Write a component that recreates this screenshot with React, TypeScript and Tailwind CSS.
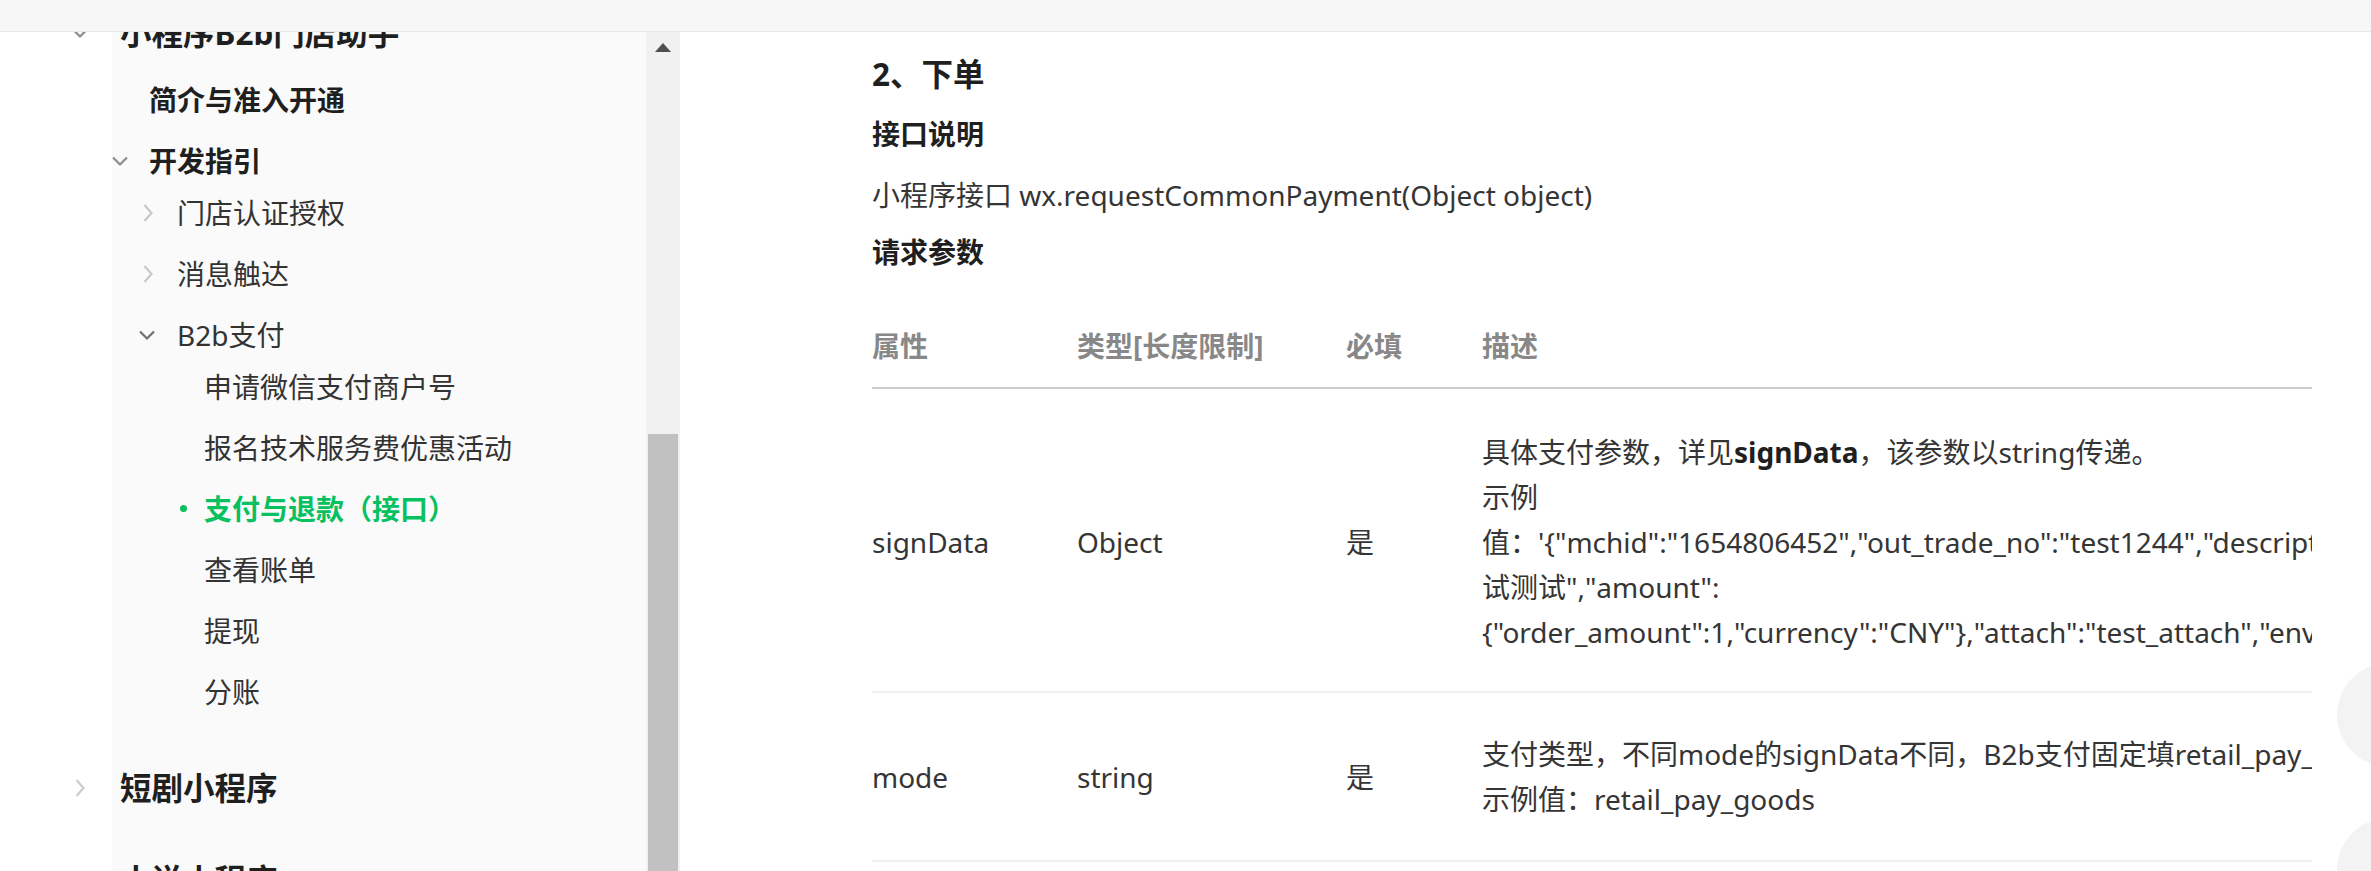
import type { ReactNode } from 'react';

const FONT = "font-['Noto_Sans','Noto_Sans_CJK_SC',sans-serif]";

function ChevronDown({ className }: { className?: string }) {
  return (
    <svg width="18" height="12" viewBox="0 0 18 12" fill="none" className={className}>
      <path d="M2 2.5l7 7 7-7" stroke="currentColor" strokeWidth="2.2" />
    </svg>
  );
}

function ChevronRight({ className }: { className?: string }) {
  return (
    <svg width="12" height="20" viewBox="0 0 12 20" fill="none" className={className}>
      <path d="M2.5 2l7 8-7 8" stroke="currentColor" strokeWidth="2.2" />
    </svg>
  );
}

function TopItem({ text, open, className = '' }: { text: string; open?: boolean; className?: string }) {
  return (
    <div className={`flex h-[61px] items-center pl-[71px] ${className}`}>
      <span className="flex w-[49px] items-center">
        {open ? <ChevronDown className="text-[#8c8c8c]" /> : <ChevronRight className="ml-[3px] text-[#cccccc]" />}
      </span>
      <span className="text-[31.5px] font-bold text-[#1f1f1f]">{text}</span>
    </div>
  );
}

function Level2({ text, open }: { text: string; open?: boolean }) {
  return (
    <div className="flex h-[61px] items-center pl-[111px]">
      <span className="flex w-[38px] items-center">{open && <ChevronDown className="text-[#8c8c8c]" />}</span>
      <span className="text-[28px] font-bold text-[#1f1f1f]">{text}</span>
    </div>
  );
}

function Level3({ text, open }: { text: string; open?: boolean }) {
  return (
    <div className="flex h-[61px] items-center pl-[138px]">
      <span className="flex w-[39px] items-center">
        {open ? <ChevronDown className="text-[#707070]" /> : <ChevronRight className="ml-[4px] text-[#c8c8c8]" />}
      </span>
      <span className="text-[28px] text-[#333333]">{text}</span>
    </div>
  );
}

function Level4({ text, active }: { text: string; active?: boolean }) {
  return (
    <div className="flex h-[61px] items-center pl-[180px]">
      <span className="flex w-[24px] items-center">
        {active && <span className="h-[7px] w-[7px] rounded-full bg-[#07c160]" />}
      </span>
      <span className={active ? 'text-[28px] font-bold text-[#07c160]' : 'text-[28px] text-[#333333]'}>{text}</span>
    </div>
  );
}

const B2B_ITEMS = ['申请微信支付商户号', '报名技术服务费优惠活动', '支付与退款（接口）', '查看账单', '提现', '分账'];

function Sidebar() {
  return (
    <aside className="w-[646px] shrink-0 overflow-hidden bg-[linear-gradient(to_right,#ffffff_112px,#fafafa_112px)]">
      <div className="-mt-[30px]">
        <TopItem text="小程序B2b门店助手" open />
        <div className="mt-[6px]">
          <Level2 text="简介与准入开通" />
          <Level2 text="开发指引" open />
          <div className="-mt-[9px]">
            <Level3 text="门店认证授权" />
            <Level3 text="消息触达" />
            <Level3 text="B2b支付" open />
            <div className="-mt-[9px]">
              {B2B_ITEMS.map(item => (
                <Level4 key={item} text={item} active={item === '支付与退款（接口）'} />
              ))}
            </div>
          </div>
        </div>
        <TopItem text="短剧小程序" className="mt-[35px]" />
        <TopItem text="小说小程序" className="mt-[31px]" />
      </div>
    </aside>
  );
}

function Scrollbar() {
  return (
    <div className="flex w-[34px] shrink-0 flex-col items-center bg-[#f1f1f1]">
      <div className="mt-[11px] h-0 w-0 border-x-[8px] border-b-[9px] border-x-transparent border-b-[#505050]" />
      <div className="mt-[382px] w-[30px] flex-1 bg-[#c1c1c1]" />
    </div>
  );
}

const COLS = 'grid grid-cols-[205px_269px_136px_830px] items-center';

function Row({ name, type, children, className }: { name: string; type: string; children: ReactNode; className: string }) {
  return (
    <div className={`${COLS} border-b-2 border-[#efefef] ${className}`}>
      <div>{name}</div>
      <div>{type}</div>
      <div>是</div>
      <div className="overflow-hidden whitespace-nowrap">{children}</div>
    </div>
  );
}

function Content() {
  return (
    <main className="relative flex-1 overflow-hidden bg-white pl-[192px] pt-[20px] text-[28px] leading-[45px] text-[#353535]">
      <h3 className="text-[31.5px] font-bold leading-[44px] text-[#1f1f1f]">2、下单</h3>
      <p className="mt-[16px] font-bold text-[#1f1f1f]">接口说明</p>
      <p className="mt-[16px]">小程序接口 wx.requestCommonPayment(Object object)</p>
      <p className="mt-[12px] font-bold text-[#1f1f1f]">请求参数</p>

      <div className="mt-[31px] w-[1440px] overflow-hidden">
        <div className={`${COLS} border-b-2 border-[#cccccc] py-[18px] font-bold text-[#888888]`}>
          <div>属性</div>
          <div>类型[长度限制]</div>
          <div>必填</div>
          <div>描述</div>
        </div>

        <Row name="signData" type="Object" className="pt-[41px] pb-[36px]">
          <div>
            具体支付参数，详见<span className="font-bold text-[#1f1f1f]">signData</span>，该参数以string传递。
          </div>
          <div>示例</div>
          <div>值：'{'{'}"mchid":"1654806452","out_trade_no":"test1244","description":"测试测</div>
          <div>试测试","amount":</div>
          <div>{'{'}"order_amount":1,"currency":"CNY"{'}'},"attach":"test_attach","env":0{'}'}'</div>
        </Row>

        <Row name="mode" type="string" className="pt-[39px] pb-[38px]">
          <div>支付类型，不同mode的signData不同，B2b支付固定填retail_pay_goods</div>
          <div>示例值：retail_pay_goods</div>
        </Row>
      </div>

      {/* floating action buttons, mostly off the right edge */}
      <div className="absolute right-[-70px] top-[631px] h-[104px] w-[104px] rounded-full bg-[#f3f3f3]" />
      <div className="absolute right-[-70px] top-[786px] h-[104px] w-[104px] rounded-full bg-[#f3f3f3]" />
    </main>
  );
}

export default function App() {
  return (
    <div className={`flex h-[871px] w-full flex-col overflow-hidden bg-white ${FONT}`}>
      <div className="h-[32px] shrink-0 border-b border-[#e9e9e9] bg-[#f6f6f6]" />
      <div className="flex min-h-0 flex-1">
        <Sidebar />
        <Scrollbar />
        <Content />
      </div>
    </div>
  );
}
